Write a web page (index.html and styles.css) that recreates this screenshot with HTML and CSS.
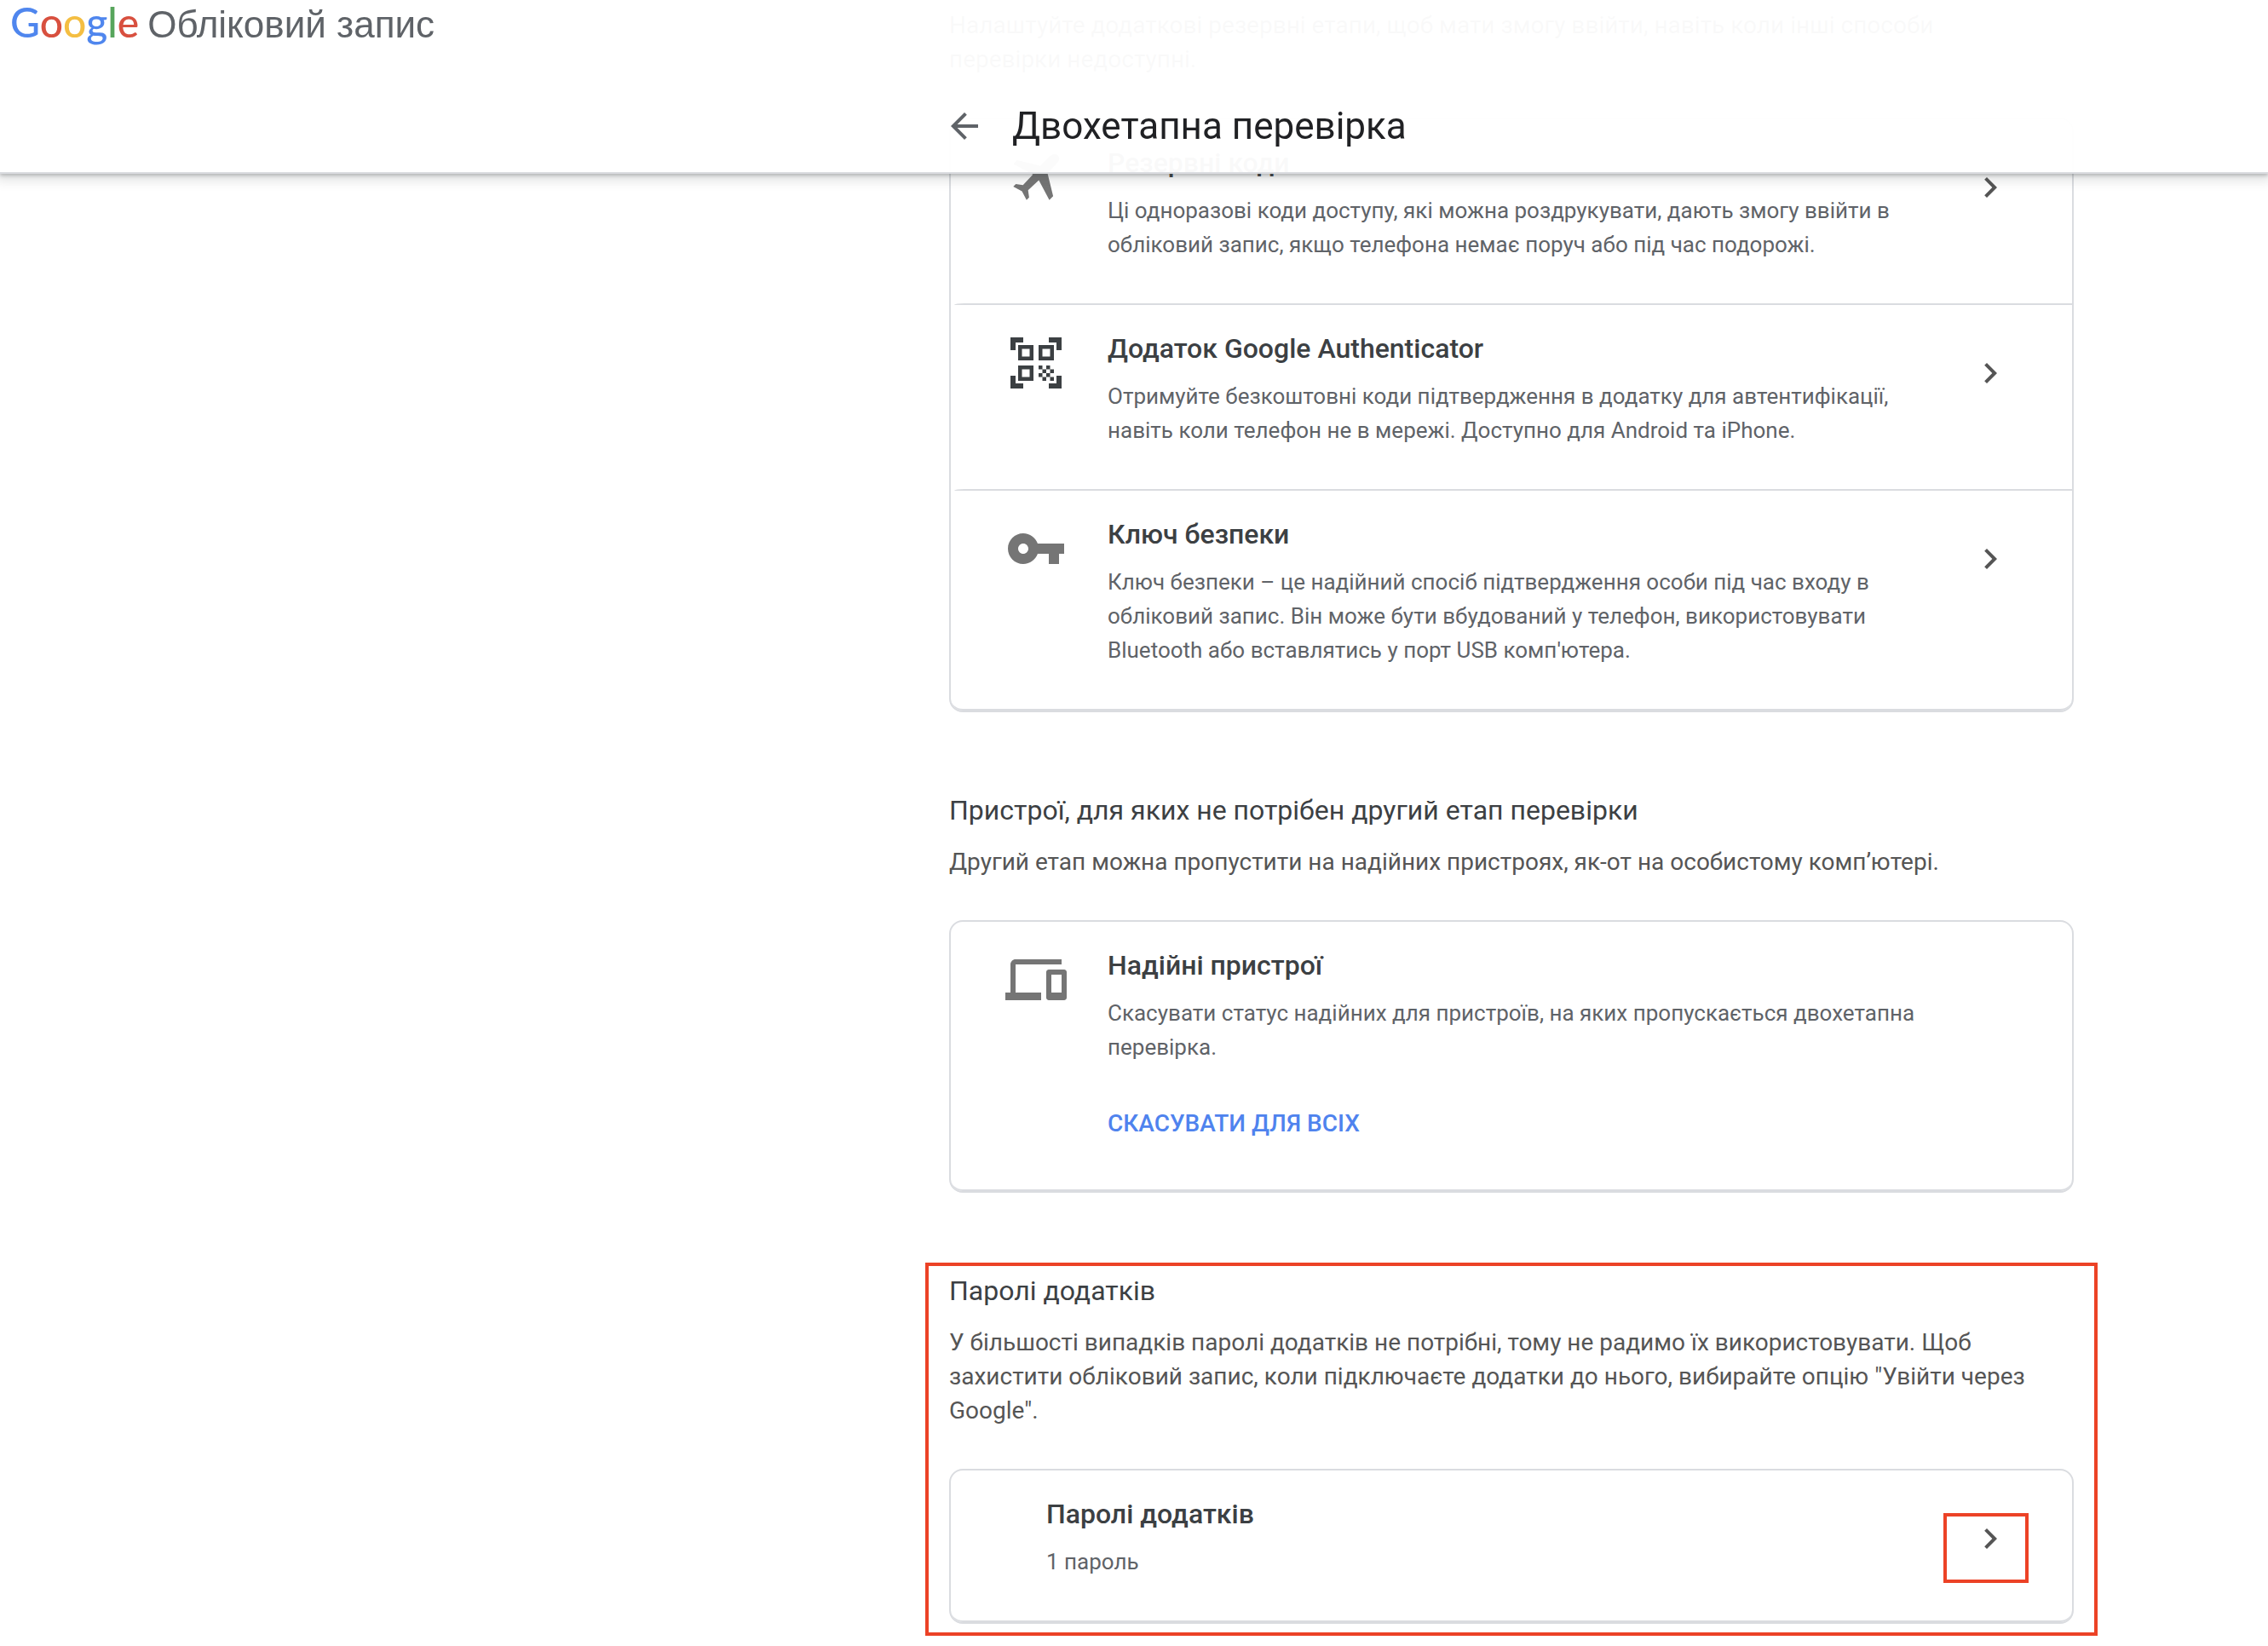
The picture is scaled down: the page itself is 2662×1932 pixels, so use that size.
FILE: index.html
```html
<!DOCTYPE html>
<html lang="uk">
<head>
<meta charset="utf-8">
<meta name="viewport" content="width=device-width, initial-scale=1">
<title>Двохетапна перевірка</title>
<link rel="stylesheet" href="styles.css">
</head>
<body>
<header class="header">
  <a class="brand" href="#">
    <span class="logo"><span class="blue">G</span><span class="red">o</span><span class="yellow">o</span><span class="blue">g</span><span class="green">l</span><span class="red">e</span></span>
    <span class="product">Обліковий запис</span>
  </a>
  <div class="header-main">
    <a class="back" href="#" aria-label="Назад"><svg class="icon-small" viewBox="0 0 24 24"><path d="M20 11H7.83l5.59-5.59L12 4l-8 8 8 8 1.41-1.41L7.83 13H20v-2z"/></svg></a>
    <h1 class="page-title">Двохетапна перевірка</h1>
  </div>
</header>

<main class="main">
  <section class="section">
    <p class="lead">Налаштуйте додаткові резервні етапи, щоб мати змогу ввійти, навіть коли інші способи перевірки&nbsp;недоступні.</p>
    <div class="card">
      <a class="item" href="#">
        <svg class="icon" viewBox="0 0 24 24"><path d="M17.200 20.900 18.700 19.400 16.500 10.400 20.560 6.100A1.500 1.500 0 0 0 17.900 3.440L13.600 7.500 4.600 5.300 3.100 6.800 10.800 10.900 6.900 15.100 4.100 14.700 3.100 15.700 6.500 17.500 8.300 20.900 9.300 19.900 8.900 17.100 13.100 13.200z"/></svg>
        <span class="text"><span class="item-title">Резервні коди</span><span class="item-desc">Ці одноразові коди доступу, які можна роздрукувати, дають змогу ввійти в обліковий запис, якщо телефона немає поруч або під час подорожі.</span></span>
        <span class="chevron"><svg class="icon-small" viewBox="0 0 24 24"><path d="M10 6 8.590 7.410 13.170 12l-4.580 4.590L10 18l6-6z"/></svg></span>
      </a>
      <hr class="divider">
      <a class="item" href="#">
        <svg class="icon icon-dark" viewBox="0 0 24 24"><path d="M9.500 6.500v3h-3v-3h3M11 5H5v6h6V5zm-1.500 9.500v3h-3v-3h3M11 13H5v6h6v-6zm6.500-6.500v3h-3v-3h3M19 5h-6v6h6V5zm-6 8h1.500v1.500H13V13zm1.500 1.500H16V16h-1.500v-1.500zM16 13h1.500v1.500H16V13zm-3 3h1.500v1.500H13V16zm1.500 1.500H16V19h-1.500v-1.500zM16 16h1.500v1.500H16V16zm1.500-1.500H19V16h-1.500v-1.500zm0 3H19V19h-1.500v-1.500zM22 7h-2V4h-3V2h5v5zm0 15v-5h-2v3h-3v2h5zM2 22h5v-2H4v-3H2v5zM2 2v5h2V4h3V2H2z"/></svg>
        <span class="text"><span class="item-title">Додаток Google Authenticator</span><span class="item-desc">Отримуйте безкоштовні коди підтвердження в додатку для автентифікації, навіть коли телефон не в мережі. Доступно для Android та iPhone.</span></span>
        <span class="chevron"><svg class="icon-small" viewBox="0 0 24 24"><path d="M10 6 8.590 7.410 13.170 12l-4.580 4.590L10 18l6-6z"/></svg></span>
      </a>
      <hr class="divider">
      <a class="item" href="#">
        <svg class="icon" viewBox="0 0 24 24"><path d="M12.650 10C11.830 7.670 9.610 6 7 6c-3.310 0-6 2.690-6 6s2.690 6 6 6c2.610 0 4.830-1.670 5.650-4H17v4h4v-4h2v-4H12.650zM7 14c-1.100 0-2-.9-2-2s.9-2 2-2 2 .9 2 2-.9 2-2 2z"/></svg>
        <span class="text"><span class="item-title">Ключ безпеки</span><span class="item-desc">Ключ безпеки – це надійний спосіб підтвердження особи під час входу в обліковий запис. Він може бути вбудований у телефон, використовувати Bluetooth або вставлятись у порт USB комп'ютера.</span></span>
        <span class="chevron"><svg class="icon-small" viewBox="0 0 24 24"><path d="M10 6 8.590 7.410 13.170 12l-4.580 4.590L10 18l6-6z"/></svg></span>
      </a>
    </div>
  </section>

  <section class="section">
    <h2 class="section-title">Пристрої, для яких не потрібен другий етап перевірки</h2>
    <p class="lead">Другий етап можна пропустити на надійних пристроях, як-от на особистому комп’ютері.</p>
    <div class="card">
      <div class="item">
        <svg class="icon" viewBox="0 0 24 24"><path d="M4 6h18V4H4c-1.100 0-2 .9-2 2v11H0v3h14v-3H4V6zm19 2h-6c-.55 0-1 .45-1 1v10c0 .55.45 1 1 1h6c.55 0 1-.45 1-1V9c0-.55-.45-1-1-1zm-1 9h-4v-7h4v7z"/></svg>
        <div class="text"><h3 class="item-title">Надійні пристрої</h3><p class="item-desc">Скасувати статус надійних для пристроїв, на яких пропускається двохетапна перевірка.</p><button class="revoke" type="button">СКАСУВАТИ ДЛЯ ВСІХ</button></div>
        <span class="chevron"></span>
      </div>
    </div>
  </section>

  <section class="section highlighted">
    <h2 class="section-title">Паролі додатків</h2>
    <p class="lead">У більшості випадків паролі додатків не потрібні, тому не радимо їх використовувати. Щоб захистити обліковий запис, коли підключаєте додатки до нього, вибирайте опцію "Увійти через Google".</p>
    <div class="card">
      <a class="item item-plain" href="#">
        <span class="text"><span class="item-title">Паролі додатків</span><span class="item-desc">1 пароль</span></span>
        <span class="chevron marked"><svg class="icon-small" viewBox="0 0 24 24"><path d="M10 6 8.590 7.410 13.170 12l-4.580 4.590L10 18l6-6z"/></svg></span>
      </a>
    </div>
  </section>
</main>
</body>
</html>
```
FILE: styles.css
```css
* {
  box-sizing: border-box;
}

body {
  margin: 0;
  background: #fff;
  color: #3c4043;
  font-family: Roboto, "Noto Sans", sans-serif;
}

h1, h2, h3, p {
  margin: 0;
  font-weight: 400;
}

a {
  color: inherit;
  text-decoration: none;
}

svg {
  display: block;
  fill: currentColor;
}

/* Fixed page header */
.header {
  position: fixed;
  inset: 0 0 auto 0;
  z-index: 1;
  display: grid;
  grid-template-columns: 886px 1fr;
  height: 204px;
  border-bottom: 2px solid #dadce0;
  background: rgba(255, 255, 255, 0.97);
  box-shadow: 0 2px 4px rgba(60, 64, 67, 0.3), 0 4px 12px 4px rgba(60, 64, 67, 0.15);
}

.brand {
  display: flex;
  align-items: baseline;
  align-self: start;
  gap: 10px;
  padding-left: 12px;
  line-height: 52px;
}

.logo {
  font-family: Lato, sans-serif;
  font-size: 48px;
  font-weight: 500;
}

.blue { color: #4f86ee; }
.red { color: #d8503f; }
.yellow { color: #f4be42; }
.green { color: #57a55c; }

.product {
  color: #5f6368;
  font-family: "Liberation Sans", Arial, sans-serif;
  font-size: 44px;
}

.header-main {
  display: flex;
  align-items: center;
  align-self: end;
  gap: 32px;
  width: 100%;
  max-width: 1332px;
  margin: 0 auto;
  padding: 0 6px 24px 0;
}

.back {
  color: #5f6368;
}

.page-title {
  color: #202124;
  font-size: 44px;
  line-height: 60px;
}

/* Content column */
.main {
  padding: 10px 0 12px 886px;
}

.section {
  max-width: 1320px;
  margin: 0 auto 96px;
}

.section:last-child {
  margin-bottom: 14px;
}

.section-title {
  margin-bottom: 22px;
  font-size: 32px;
  line-height: 38px;
}

.lead {
  margin-bottom: 48px;
  color: #555;
  font-size: 28px;
  line-height: 40px;
}

.card {
  border: 2px solid #dadce0;
  border-radius: 16px;
}

.item {
  display: flex;
  align-items: flex-start;
  padding: 32px 72px 49px 64px;
}

.item:last-child {
  border-bottom: 2px solid #dadce0;
  border-radius: 0 0 14px 14px;
}

.item-plain {
  padding-left: 112px;
}

.divider {
  height: 2px;
  margin: 0 0 0 4px;
  border: 0;
  border-radius: 12px 0 0 0 / 2px 0 0 0;
  background: #dadce0;
}

.icon {
  flex: none;
  width: 72px;
  height: 72px;
  margin-right: 48px;
  color: #757575;
}

.icon-dark {
  color: #3c4043;
}

.icon-small {
  width: 48px;
  height: 48px;
}

.text {
  flex: 1;
  min-width: 0;
}

.item-title {
  display: block;
  margin-bottom: 17px;
  font-size: 32px;
  font-weight: 500;
  line-height: 38px;
}

.item-desc {
  display: block;
  color: #5f6368;
  font-size: 26px;
  line-height: 40px;
}

.chevron {
  flex: none;
  width: 48px;
  margin: 24px 0 0 24px;
  color: #555;
}

.revoke {
  display: block;
  padding: 50px 0 8px;
  border: 0;
  background: none;
  color: #4f83ee;
  font-family: inherit;
  font-size: 28px;
  font-weight: 500;
  line-height: 40px;
}

/* Attention frames */
.highlighted,
.marked {
  position: relative;
}

.highlighted::before,
.marked::before {
  content: "";
  position: absolute;
  border: 4px solid #ec4226;
  pointer-events: none;
}

.highlighted::before {
  inset: -14px -28px;
}

.marked::before {
  inset: -6px -21px -28px -31px;
}
```
